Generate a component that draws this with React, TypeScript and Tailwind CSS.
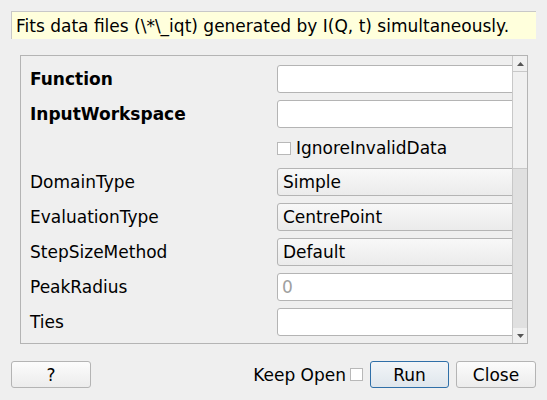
import React from "react";

const rows: { label: string; bold?: boolean; kind: "input" | "combo" | "check"; value?: string; placeholder?: string }[] = [
  { label: "Function", bold: true, kind: "input" },
  { label: "InputWorkspace", bold: true, kind: "input" },
  { label: "", kind: "check", value: "IgnoreInvalidData" },
  { label: "DomainType", kind: "combo", value: "Simple" },
  { label: "EvaluationType", kind: "combo", value: "CentrePoint" },
  { label: "StepSizeMethod", kind: "combo", value: "Default" },
  { label: "PeakRadius", kind: "input", placeholder: "0" },
  { label: "Ties", kind: "input" },
  // next row only peeks in at the bottom edge
  { label: "", kind: "input" },
];

function Field({ row }: { row: (typeof rows)[number] }) {
  if (row.kind === "check") {
    return (
      <div className="flex h-[26px] items-center gap-[5px]">
        <span className="h-[13px] w-[14px] border border-[#b8b8b8] bg-white" />
        <span>{row.value}</span>
      </div>
    );
  }
  if (row.kind === "combo") {
    return (
      <div className="flex h-[28px] w-[262px] shrink-0 items-center rounded-[3px] border border-[#b4b4b4] bg-gradient-to-b from-[#f8f8f8] to-[#ebebeb] pl-[5px]">
        {row.value}
      </div>
    );
  }
  return (
    <div className="flex h-[28px] w-[262px] shrink-0 items-center rounded-[3px] border border-[#b4b4b4] bg-white pl-[4px] text-[#a0a0a0]">
      {row.placeholder}
    </div>
  );
}

export default function App() {
  return (
    <div
      className="flex h-[400px] w-[547px] flex-col bg-[#efefef] text-[17px] leading-[22px] text-black"
      style={{ fontFamily: '"DejaVu Sans", sans-serif' }}
    >
      <div className="mx-[11px] mt-[11px] flex h-[28px] w-[525px] items-center border-l border-t border-[#c8c8c8] bg-[#ffffdc] pl-[4px]">
        Fits data files (\*\_iqt) generated by I(Q, t) simultaneously.
      </div>

      <div className="ml-[20px] mt-[16px] flex h-[289px] w-[508px] border border-[#b4b4b4]">
        <div className="flex-1 overflow-hidden">
          <div className="flex flex-col gap-[7px] pt-[9px]">
            {rows.map((row, i) => (
              <div key={i} className="flex items-center">
                <div className={`w-[256px] shrink-0 pl-[9px] ${row.bold ? "font-bold" : ""}`}>{row.label}</div>
                <Field row={row} />
              </div>
            ))}
          </div>
        </div>
        <div className="flex w-[15px] flex-col border-l border-[#c8c8c8] bg-[#e0e0e0]">
          <div className="flex h-[15px] items-center justify-center bg-[#f0f0f0]">
            <svg width="7" height="4" viewBox="0 0 7 4">
              <path d="M0 4 L3.5 0 L7 4 Z" fill="#555" />
            </svg>
          </div>
          <div className="h-[98px] border-y border-[#c8c8c8] bg-[#f0f0f0]" />
          <div className="flex-1" />
          <div className="flex h-[15px] items-center justify-center bg-[#f0f0f0]">
            <svg width="7" height="4" viewBox="0 0 7 4">
              <path d="M0 0 L3.5 4 L7 0 Z" fill="#555" />
            </svg>
          </div>
        </div>
      </div>

      <div className="mx-[11px] mt-[17px] flex items-center">
        <button className="h-[27px] w-[80px] rounded-[3px] border border-[#b4b4b4] bg-gradient-to-b from-[#fcfcfc] to-[#ececec] leading-[20px]">
          ?
        </button>
        <div className="flex-1" />
        <span>Keep Open</span>
        <span className="ml-[4px] h-[13px] w-[13px] border border-[#b8b8b8] bg-white" />
        <button className="ml-[7px] h-[27px] w-[79px] rounded-[3px] border border-[#2f6fa8] bg-gradient-to-b from-[#f2f5f8] to-[#dfe6ec] leading-[20px]">
          Run
        </button>
        <button className="ml-[7px] h-[27px] w-[80px] rounded-[3px] border border-[#b4b4b4] bg-gradient-to-b from-[#fcfcfc] to-[#ececec] leading-[20px]">
          Close
        </button>
      </div>
    </div>
  );
}
